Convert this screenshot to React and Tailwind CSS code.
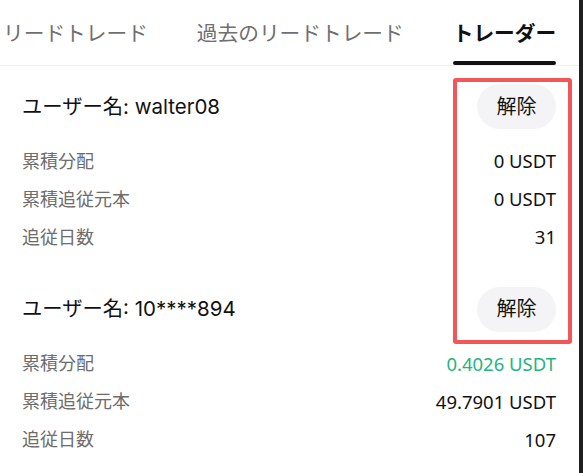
const TABS = [
  { label: 'リードトレード', active: false },
  { label: '過去のリードトレード', active: false },
  { label: 'トレーダー', active: true },
];

const TRADERS = [
  {
    name: 'walter08',
    rows: [
      { label: '累積分配', value: '0 USDT' },
      { label: '累積追従元本', value: '0 USDT' },
      { label: '追従日数', value: '31' },
    ],
  },
  {
    name: '10****894',
    rows: [
      { label: '累積分配', value: '0.4026 USDT', positive: true },
      { label: '累積追従元本', value: '49.7901 USDT' },
      { label: '追従日数', value: '107' },
    ],
  },
];

function TraderCard({ trader }) {
  return (
    <div className="pl-[22px] pr-[23px]">
      <div className="flex items-center justify-between h-[45px]">
        <div className="text-[20.3px] text-[#111] whitespace-nowrap">
          <span>ユーザー名</span>
          <span className="font-['Inter'] text-[20.5px]">: {trader.name}</span>
        </div>
        <button className="h-[45px] w-[79px] rounded-full bg-[#f4f4f6] text-[20px] text-[#111]">
          解除
        </button>
      </div>
      <div className="mt-[13px]">
        {trader.rows.map((row, i) => (
          <div key={i} className="flex items-center justify-between h-[38px]">
            <span className="text-[18px] text-[#6d6d6d]">{row.label}</span>
            <span
              className={
                'text-[18.5px] ' + (row.positive ? 'text-[#1fb57e]' : 'text-[#111]')
              }
            >
              {row.value}
            </span>
          </div>
        ))}
      </div>
    </div>
  );
}

export default function App() {
  return (
    <div
      className="relative w-[583px] h-[473px] overflow-hidden bg-white border-r-4 border-[#1f1f1f]"
      style={{ fontFamily: '"Noto Sans", "Noto Sans CJK JP", sans-serif' }}
    >
      <div className="flex items-end gap-[49px] h-[66px] pl-[3px] border-b border-[#f0f0f0]">
        {TABS.map((tab, i) => (
          <div key={i} className="flex flex-col items-center">
            <span
              className={
                'text-[20.7px] leading-none whitespace-nowrap ' +
                (tab.active ? 'font-bold text-[#111]' : 'text-[#6f6f6f]')
              }
            >
              {tab.label}
            </span>
            <span
              className={
                'mt-[17px] h-[4px] w-full rounded-full ' + (tab.active ? 'bg-[#111]' : 'bg-transparent')
              }
            />
          </div>
        ))}
      </div>

      <div className="pt-[18px] flex flex-col gap-[30.5px]">
        {TRADERS.map((t, i) => (
          <TraderCard key={i} trader={t} />
        ))}
      </div>

      {/* highlight frame over the action column */}
      <div className="absolute left-[453px] top-[78px] w-[119px] h-[266px] border-4 border-[#f25757] rounded-[3px] pointer-events-none" />
    </div>
  );
}
